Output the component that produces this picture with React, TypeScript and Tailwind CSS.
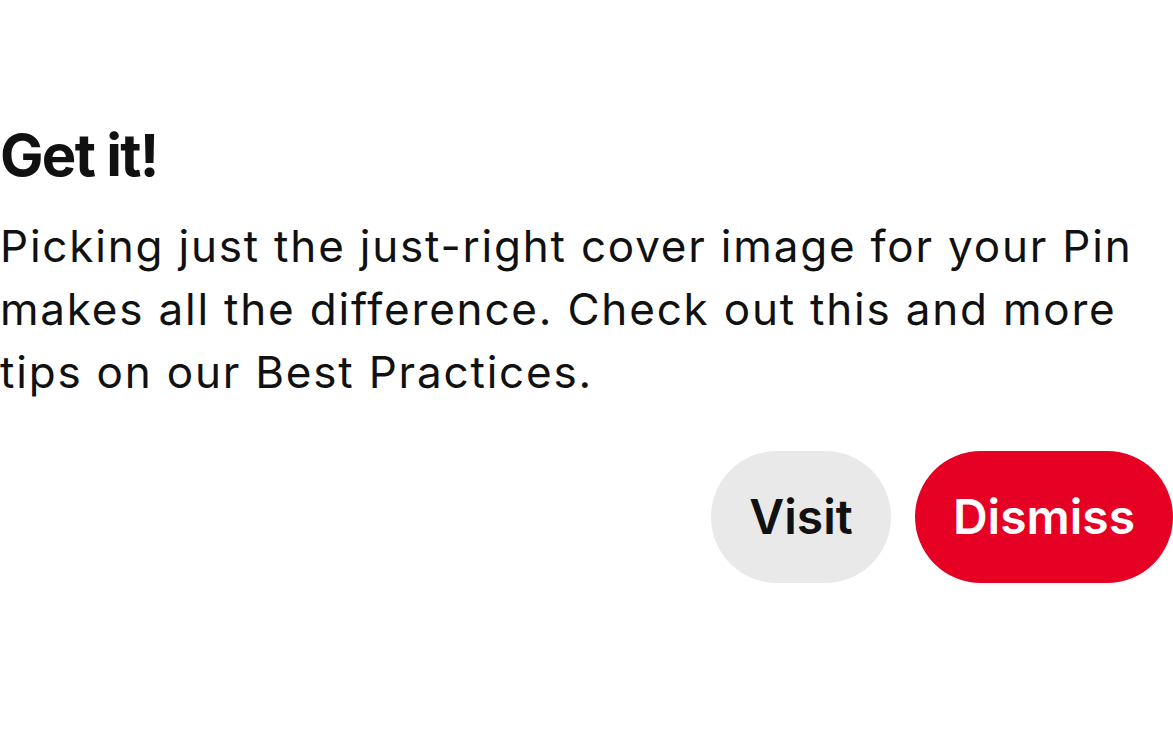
export default function App() {
  return (
    <div className="w-[1173px] h-[750px] bg-white overflow-hidden" style={{ fontFamily: 'Inter, "Noto Sans", sans-serif' }}>
      <div className="pt-[120px] flex flex-col">
        <h1 className="text-[58px] font-bold leading-[70px] text-[#111111] tracking-[-1.7px]">Get it!</h1>
        <p className="mt-[25px] text-[44px] leading-[63px] text-[#111111] w-[1173px] tracking-[1.8px]">
          Picking just the just-right cover image for your Pin makes all the difference. Check out this and more tips on our Best Practices.
        </p>
        <div className="mt-[47px] flex justify-end gap-[24px]">
          <button className="h-[132px] w-[180px] rounded-full bg-[#e9e9e9] text-[#111111] text-[48px] font-semibold">Visit</button>
          <button className="h-[132px] w-[258px] rounded-full bg-[#e60023] text-white text-[48px] font-semibold">Dismiss</button>
        </div>
      </div>
    </div>
  );
}
